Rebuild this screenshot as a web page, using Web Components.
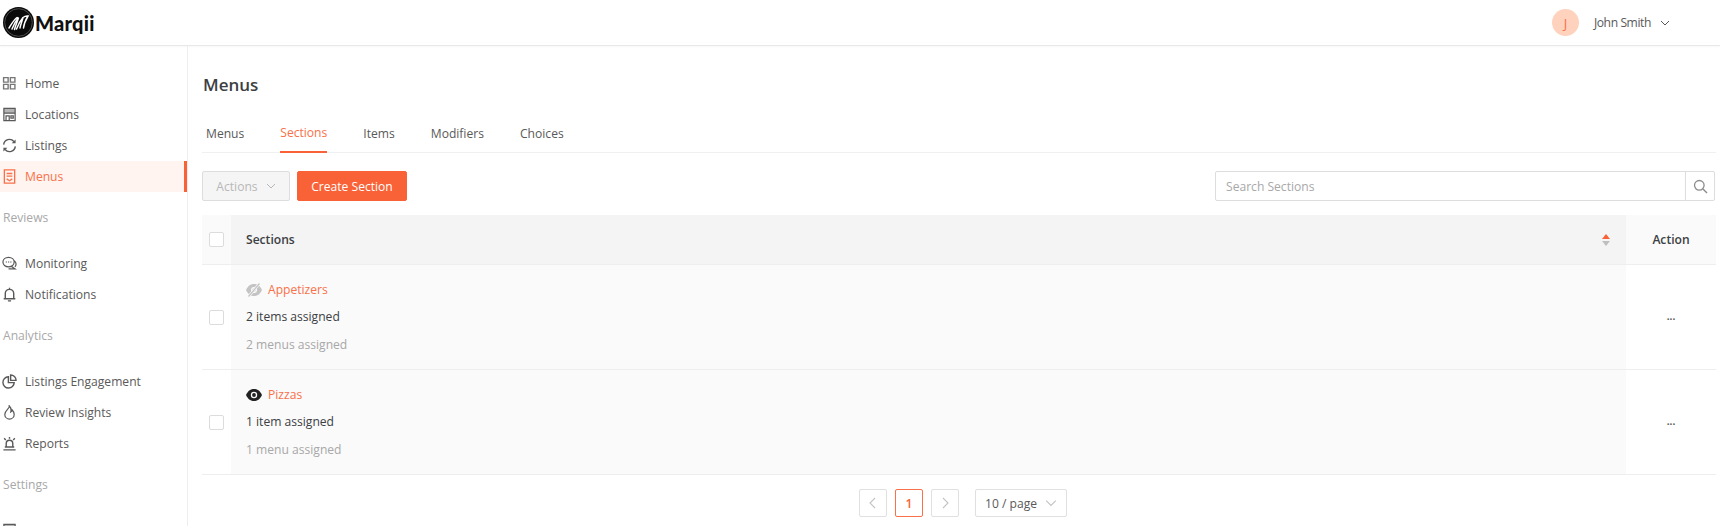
<!DOCTYPE html>
<html><head><meta charset="utf-8">
<style>
html,body{margin:0;padding:0;height:526px;overflow:hidden;background:#fff}
body{font-family:"Open Sans","Noto Sans",sans-serif;font-size:12.1px;color:#3c4043}
</style></head><body>
<app-shell></app-shell>
<script>
const ICONS={
home:'<g transform="translate(.3 .3) scale(.93)" opacity=".82"><path d="M1.500 1.500h5.200v5.200H1.500zM9.300 1.500h5.200v5.200H9.300zM1.500 9.300h5.200v5.200H1.500zM9.300 9.300h5.200v5.200H9.300z" fill="none" stroke="currentColor" stroke-width="1.600"/></g>',
loc:'<path d="M2 1.500h12v13H2zM2 6.500h12M4.300 14.500V9.500h3.400v5M9.500 9.500h2.500v2.300H9.500z" fill="none" stroke="currentColor" stroke-width="1.300"/><path d="M2 2h12v4.500H2z" fill="currentColor" opacity=".45"/>',
sync:'<path d="M1.800 7A6.200 6.200 0 0 1 12.700 3.700M14.200 9A6.200 6.200 0 0 1 3.300 12.300" fill="none" stroke="currentColor" stroke-width="1.500"/><path d="M14.500 1.500v4.200h-4.200zM1.500 14.500v-4.200h4.200z" fill="currentColor"/>',
menu:'<path d="M2.500 1h11v14h-11zM5 4.800h6M5 7.500h6M5 10.500l3 2 3-2" fill="none" stroke="currentColor" stroke-width="1.400"/>',
chat:'<path d="M7 1.500C3.500 1.500 1 3.700 1 6.500s2.500 5 6 5c3.400 0 6-2.200 6-5s-2.600-5-6-5zM9.800 11l4.200 2.800H7M13 5c1.300.9 2 2.200 2 3.600 0 1.100-.4 2.100-1.200 3" fill="none" stroke="currentColor" stroke-width="1.300"/><path d="M4 6.500h1.300M6.400 6.500h1.300M8.800 6.500h1.300" stroke="currentColor" stroke-width="1.100"/>',
bell:'<path d="M3.500 12.300V7a4.500 4.500 0 0 1 9 0v5.300M1.800 12.500h12.400M6.300 14.800h3.400M8 .8v1.700" fill="none" stroke="currentColor" stroke-width="1.500"/>',
pie:'<path d="M6.800 3A6 6 0 1 0 13 9.200H6.800zM9.200 1v5.800H15A5.800 5.800 0 0 0 9.200 1z" fill="none" stroke="currentColor" stroke-width="1.500"/>',
fire:'<path d="M7.800 1c.6 2.700-4.800 4.800-4.800 9a5 5 0 0 0 10 0c0-2-1-3.500-2.100-4.700-.2 1.100-.7 1.800-1.500 2.200C10 4.800 9.500 2.600 7.800 1z" fill="none" stroke="currentColor" stroke-width="1.300"/>',
alarm:'<path d="M4.500 11.500V8a3.500 3.500 0 0 1 7 0v3.500M1.500 14.800h13M3 11.800h10M8 1v2M2.300 2.500l1.700 1.700M13.700 2.500 12 4.200" fill="none" stroke="currentColor" stroke-width="1.500"/>'
};
const svg=(k,s=16)=>`<svg width="${s}" height="${s}" viewBox="0 0 16 16">${ICONS[k]}</svg>`;
const chev=(s=10,c='currentColor')=>`<svg width="${s}" height="${s}" viewBox="0 0 10 10"><path d="M1 3l4 4 4-4" fill="none" stroke="${c}" stroke-width="1"/></svg>`;

customElements.define('app-logo',class extends HTMLElement{constructor(){super();this.attachShadow({mode:'open'}).innerHTML=`<style>
:host{display:flex;align-items:center;gap:1px;padding-left:3px}
span{font:900 20px/1 "Lato","Open Sans",sans-serif;color:#111;letter-spacing:.25px}
</style><svg width="31" height="31" viewBox="0 0 31 31"><circle cx="15.500" cy="15.500" r="15.500" fill="#0a0a0a"/><circle cx="15.500" cy="15.500" r="13.800" fill="none" stroke="#666" stroke-width=".7"/><path d="M6 21c2.500-4 5-8.500 8-10.500M9 22c1.500-4 4-8.500 6.500-11.500-.8 3.500-3 8-4 12M13.500 22c1.500-4 4-8.500 6.500-11.500-.8 3.500-2.600 7.500-3 10.500M20 10.500c2-1.500 3.500-1.800 5-1.500-1.800 3-4 7.500-4.500 12" fill="none" stroke="#fff" stroke-width="1.500" stroke-linecap="round"/></svg><span>Marqii</span>`}});

customElements.define('user-menu',class extends HTMLElement{constructor(){super();this.attachShadow({mode:'open'}).innerHTML=`<style>
:host{display:flex;align-items:center;color:#595959;font-size:12.1px}
.a{width:27px;height:27px;border-radius:50%;background:#ffd2bd;color:#f9704a;display:flex;align-items:center;justify-content:center;margin-right:15px;font-size:13px}
span{letter-spacing:-.4px}
svg{margin-left:9px}
</style><div class="a">J</div><span><slot></slot></span>${chev(10)}`}});

customElements.define('app-header',class extends HTMLElement{constructor(){super();this.attachShadow({mode:'open'}).innerHTML=`<style>
:host{display:flex;justify-content:space-between;align-items:center;height:46px;box-sizing:border-box;border-bottom:1px solid #e8e8e8;padding-right:50px;flex:none;box-shadow:0 1px 2px rgba(0,0,0,.03)}
</style><app-logo></app-logo><user-menu>John Smith</user-menu>`}});

customElements.define('nav-item',class extends HTMLElement{constructor(){super();const k=this.getAttribute('icon');this.attachShadow({mode:'open'}).innerHTML=`<style>
:host{display:flex;align-items:center;height:31px;gap:8px;padding-left:2px;color:#595959;font-size:12.1px;box-sizing:border-box;flex:none}
:host([active]){background:#fff4ef;color:#f9704a;border-right:3px solid #f96236}
svg{flex:none;width:15px;height:15px}
</style>${svg(k)}<span><slot></slot></span>`}});

customElements.define('nav-label',class extends HTMLElement{constructor(){super();this.attachShadow({mode:'open'}).innerHTML=`<style>
:host{display:flex;align-items:center;height:56px;padding-left:3px;color:#a8a8a8;font-size:12.1px;flex:none;box-sizing:border-box;padding-bottom:6px}
</style><slot></slot>`}});

customElements.define('side-nav',class extends HTMLElement{constructor(){super();this.attachShadow({mode:'open'}).innerHTML=`<style>
:host{display:flex;flex-direction:column;width:188px;flex:none;box-sizing:border-box;border-right:1px solid #eee;padding-top:22px;overflow:hidden}
</style>
<nav-item icon="home">Home</nav-item><nav-item icon="loc">Locations</nav-item><nav-item icon="sync">Listings</nav-item><nav-item icon="menu" active>Menus</nav-item>
<nav-label>Reviews</nav-label>
<nav-item icon="chat">Monitoring</nav-item><nav-item icon="bell">Notifications</nav-item>
<nav-label>Analytics</nav-label>
<nav-item icon="pie">Listings Engagement</nav-item><nav-item icon="fire">Review Insights</nav-item><nav-item icon="alarm">Reports</nav-item>
<nav-label>Settings</nav-label>
<nav-item icon="loc"></nav-item>`}});

customElements.define('tab-bar',class extends HTMLElement{constructor(){super();const tabs=['Menus','Sections','Items','Modifiers','Choices'];this.attachShadow({mode:'open'}).innerHTML=`<style>
:host{display:flex;height:40px;gap:36px;border-bottom:1px solid #f0f0f0;padding-left:4px;box-sizing:border-box;flex:none}
div{display:flex;align-items:center;height:40px;box-sizing:border-box;color:#595959}
.on{color:#f9704a;border-bottom:2px solid #f96236}
</style>${tabs.map((t,i)=>`<div class="${i==1?'on':''}">${t}</div>`).join('')}`}});

customElements.define('tool-bar',class extends HTMLElement{constructor(){super();this.attachShadow({mode:'open'}).innerHTML=`<style>
:host{display:flex;align-items:center;height:30px;gap:7px;flex:none;margin:18px 1px 14px 0}
button{font:inherit;height:30px;border-radius:2px;box-sizing:border-box;display:flex;align-items:center;justify-content:center;padding:0}
.act{width:88px;background:#f5f5f5;border:1px solid #ddd;color:#b8b8b8;gap:8px}
.cr{width:110px;background:#f96236;border:1px solid #f96236;color:#fff}
.s{margin-left:auto;display:flex;height:30px;width:500px;box-sizing:border-box;border:1px solid #ddd;border-radius:2px}
.i{flex:1;color:#a8a8a8;display:flex;align-items:center;padding-left:10px}
.b{width:28px;border-left:1px solid #ddd;display:flex;align-items:center;justify-content:center}
</style><button class="act">Actions ${chev(10,'#b8b8b8')}</button><button class="cr">Create Section</button>
<div class="s"><div class="i">Search Sections</div><div class="b"><svg width="15" height="15" viewBox="0 0 15 15"><circle cx="6.300" cy="6.300" r="4.800" fill="none" stroke="#8c8c8c" stroke-width="1.300"/><path d="M10 10l4 4" stroke="#8c8c8c" stroke-width="1.400"/></svg></div></div>`}});

customElements.define('check-box',class extends HTMLElement{constructor(){super();this.attachShadow({mode:'open'}).innerHTML=`<style>
:host{display:block;width:15px;height:15px;box-sizing:border-box;border:1px solid #dcdcdc;border-radius:2px;background:#fff}
</style>`}});

customElements.define('section-row',class extends HTMLElement{constructor(){super();const on=this.hasAttribute('visible');
const body='M0 6C2 1.500 5 0 8 0s6 1.500 8 6c-2 4.500-5 6-8 6s-6-1.500-8-6z';
const eye=on?`<svg width="16" height="12" viewBox="0 0 16 12"><path d="${body}" fill="#222"/><circle cx="8" cy="6" r="3.200" fill="#fafafa"/><circle cx="8" cy="6" r="1.900" fill="#222"/></svg>`
:`<svg width="16" height="14" viewBox="0 0 16 14"><g transform="translate(0 1)"><path d="${body}" fill="#c4c4c4"/><circle cx="8" cy="6" r="3" fill="#fafafa"/><circle cx="8" cy="6" r="1.700" fill="#c4c4c4"/></g><path d="M2.500 13.500 13.500.5" stroke="#fafafa" stroke-width="2.600"/><path d="M2.500 13.500 13.500.5" stroke="#c4c4c4" stroke-width="1.300"/></svg>`;
this.attachShadow({mode:'open'}).innerHTML=`<style>
:host{display:grid;grid-template-columns:29px 1fr 90px;height:105px;box-sizing:border-box;border-bottom:1px solid #eee;flex:none}
.c{display:flex;align-items:center;justify-content:center}
.m{background:#fafafa;padding-left:15px;display:flex;flex-direction:column;justify-content:center}
.l{height:27.400px;display:flex;align-items:center;gap:6px}
.t{color:#f9704a}.x{color:#3c4043}.y{color:#a8a8a8}
.a{display:flex;align-items:center;justify-content:center;color:#595959;font-weight:700;font-size:10px;padding-bottom:2px}
</style><div class="c"><check-box></check-box></div>
<div class="m"><div class="l">${eye}<span class="t">${this.getAttribute('name')}</span></div><div class="l x">${this.getAttribute('items')}</div><div class="l y">${this.getAttribute('menus')}</div></div>
<div class="a">...</div>`}});

customElements.define('table-head',class extends HTMLElement{constructor(){super();this.attachShadow({mode:'open'}).innerHTML=`<style>
:host{display:grid;grid-template-columns:29px 1fr 90px;height:50px;box-sizing:border-box;border-bottom:1px solid #eee;background:#fafafa;font-weight:600;color:#3c4043;flex:none}
.c{display:flex;align-items:center;justify-content:center}
.m{background:#f4f4f4;padding:0 16px 0 15px;display:flex;align-items:center;justify-content:space-between}
.a{display:flex;align-items:center;justify-content:center}
</style><div class="c"><check-box></check-box></div><div class="m"><span>Sections</span><svg width="8" height="12" viewBox="0 0 8 12"><path d="M4 0l4 5H0z" fill="#f96236"/><path d="M4 12l4-5H0z" fill="#bfbfbf"/></svg></div><div class="a">Action</div>`}});

customElements.define('page-nav',class extends HTMLElement{constructor(){super();
const arrow=d=>`<svg width="10" height="12" viewBox="0 0 10 12"><path d="${d}" fill="none" stroke="#c4c4c4" stroke-width="1.100"/></svg>`;
this.attachShadow({mode:'open'}).innerHTML=`<style>
:host{display:flex;justify-content:center;align-items:center;gap:8px;margin:14px 0 0 8px;flex:none}
div{width:28px;height:28px;box-sizing:border-box;border:1px solid #e0e0e0;border-radius:2px;display:flex;align-items:center;justify-content:center}
.on{border-color:#f9704a;color:#f96236;font-weight:600}
.sel{width:92px;margin-left:8px;color:#595959;gap:8px}
</style><div>${arrow('M7 1 2 6l5 5')}</div><div class="on">1</div><div>${arrow('M3 1l5 5-5 5')}</div><div class="sel">10 / page ${chev(12,'#c4c4c4')}</div>`}});

customElements.define('menu-page',class extends HTMLElement{constructor(){super();this.attachShadow({mode:'open'}).innerHTML=`<style>
:host{display:flex;flex-direction:column;flex:1;min-width:0;padding:0 4px 0 14px;overflow:hidden}
h1{font-size:17px;font-weight:600;color:#3c4043;margin:0;height:67px;display:flex;align-items:center;padding:10px 0 0 1px;box-sizing:border-box;flex:none}
</style><h1>Menus</h1><tab-bar></tab-bar><tool-bar></tool-bar><table-head></table-head>
<section-row name="Appetizers" items="2 items assigned" menus="2 menus assigned"></section-row>
<section-row visible name="Pizzas" items="1 item assigned" menus="1 menu assigned"></section-row>
<page-nav></page-nav>`}});

customElements.define('app-shell',class extends HTMLElement{constructor(){super();this.attachShadow({mode:'open'}).innerHTML=`<style>
:host{display:flex;flex-direction:column;height:526px;overflow:hidden}
.b{display:flex;flex:1;min-height:0}
</style><app-header></app-header><div class="b"><side-nav></side-nav><menu-page></menu-page></div>`}});
</script></body></html>
